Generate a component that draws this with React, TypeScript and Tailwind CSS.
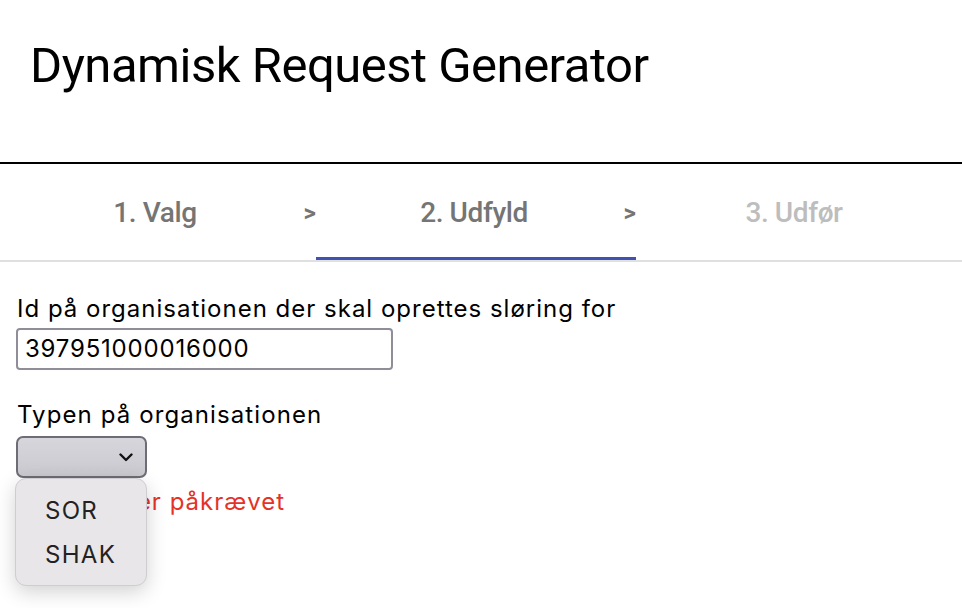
import React from "react";

export default function App() {
  const sans = { fontFamily: "Inter, 'Noto Sans', sans-serif" } as React.CSSProperties;
  return (
    <div className="w-[962px] h-[608px] bg-white overflow-hidden relative" style={{ fontFamily: "Roboto, sans-serif" }}>
      <header className="h-[162px] px-[30px] border-b-2 border-black box-content">
        <h1 className="pt-[37px] text-[49px] leading-[58px] font-normal text-black tracking-[-0.5px]">
          Dynamisk Request Generator
        </h1>
      </header>

      <nav className="flex h-[96px] border-b-2 border-[#e0e0e0] box-content">
        <div className="relative w-[316px] flex items-center justify-center">
          <span className="text-[28px] font-medium text-[#757575] tracking-[-0.4px] pt-[2px] pr-[6px]">1. Valg</span>
          <span className="absolute right-0 top-0 bottom-0 flex items-center text-[24px] font-bold text-[#757575] pt-[1px]">&gt;</span>
        </div>
        <div className="relative w-[320px] flex items-center justify-center">
          <span className="text-[28px] font-medium text-[#757575] tracking-[-0.4px] pt-[2px] pr-[4px]">2. Udfyld</span>
          <span className="absolute right-0 top-0 bottom-0 flex items-center text-[24px] font-bold text-[#757575] pt-[1px]">&gt;</span>
          <div className="absolute left-0 right-0 bottom-0 h-[3px] bg-[#3f51b5]" />
        </div>
        <div className="relative w-[320px] flex items-center justify-center">
          <span className="text-[28px] font-medium text-[#bdbdbd] tracking-[-0.4px] pt-[2px] pr-[4px]">3. Udfør</span>
        </div>
      </nav>

      <main className="px-4 pt-[33px]" style={sans}>
        <label className="block text-[24px] leading-[28px] text-black tracking-[1px] pl-[1px]">
          Id på organisationen der skal oprettes sløring for
        </label>
        <div className="mt-[5px] w-[377px] h-[42px] border-2 border-[#8f8e98] rounded-[4px] flex items-center px-[7px]">
          <span className="text-[24px] text-black tracking-[0.8px] leading-none">397951000016000</span>
        </div>

        <label className="block mt-[31px] text-[24px] leading-[28px] text-black tracking-[1.1px] pl-[1px]">
          Typen på organisationen
        </label>
        <div className="relative mt-[7px]">
          <div className="w-[131px] h-[42px] border-2 border-[#6e6d77] rounded-[7px] bg-gradient-to-b from-[#d7d6dc] to-[#cac9cf] flex items-center justify-end pr-[12px]">
            <svg width="14" height="9" viewBox="0 0 14 9" fill="none">
              <path d="M1.5 1.5 L7 7 L12.5 1.5" stroke="#111" strokeWidth="2.4" strokeLinecap="round" strokeLinejoin="round" />
            </svg>
          </div>
          <div className="mt-[10px] text-[24px] leading-[28px] text-[#e53227] tracking-[1px]">
            Dette felt er påkrævet
          </div>

          <div className="absolute left-[-1px] top-[42px] w-[132px] h-[108px] rounded-[11px] bg-[#e8e6e8] border border-[#cfcdd0] shadow-[0_6px_20px_rgba(0,0,0,0.18)] pt-[10px] pl-[29px]">
            <div className="text-[24px] leading-[44px] text-[#222] tracking-[1.3px]">SOR</div>
            <div className="text-[24px] leading-[44px] text-[#222] tracking-[1.3px]">SHAK</div>
          </div>
        </div>
      </main>
    </div>
  );
}
